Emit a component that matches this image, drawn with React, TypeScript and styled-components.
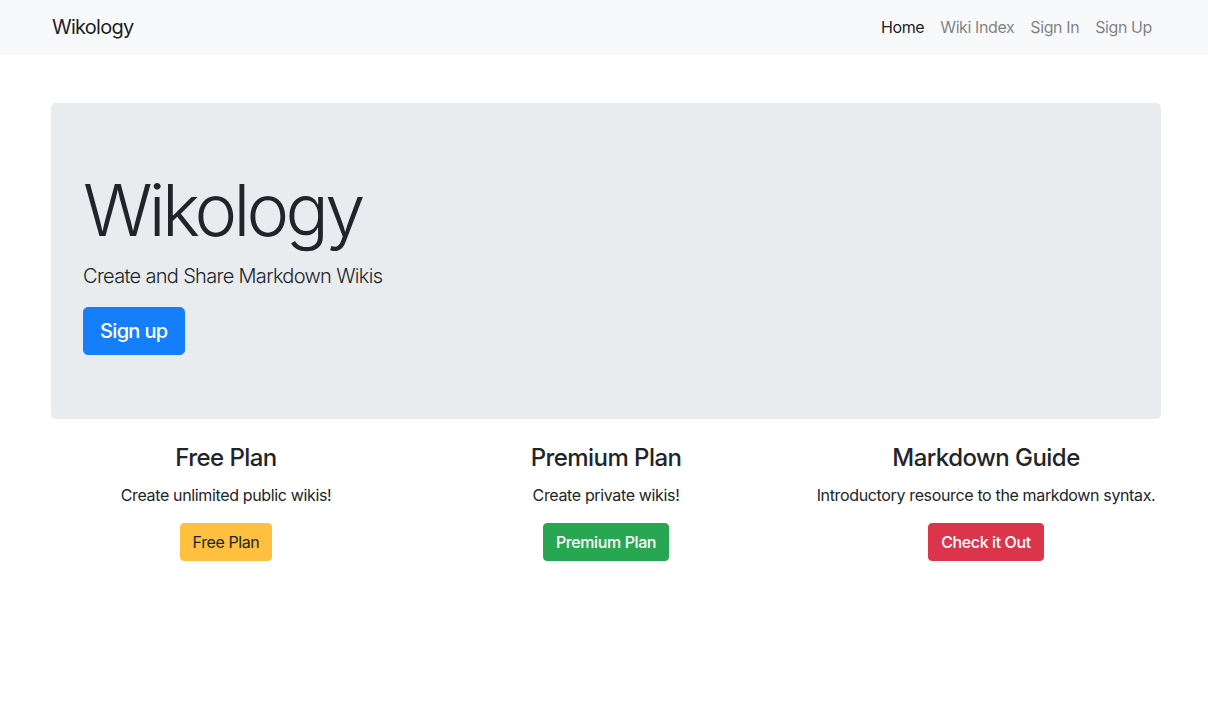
import React from "react";
import styled, { createGlobalStyle, css } from "styled-components";

const Global = createGlobalStyle`
  * { box-sizing: border-box; }
  html, body { margin: 0; padding: 0; background: #fff; }
  body {
    font-family: Inter, "Noto Sans", "Liberation Sans", sans-serif;
    font-size: 16px;
    line-height: 1.5;
    color: #212529;
    letter-spacing: -0.02em;
  }
`;

const Page = styled.div`
  width: 1212px;
`;

const NavBar = styled.nav`
  background: #f8f9fa;
  height: 55px;
`;

const NavInner = styled.div`
  width: 1140px;
  margin: 0 auto;
  height: 100%;
  padding: 0 16px;
  display: flex;
  align-items: center;
  justify-content: space-between;
`;

const Brand = styled.a`
  font-size: 20px;
  line-height: 30px;
  letter-spacing: -0.037em;
  color: rgba(0, 0, 0, 0.9);
  text-decoration: none;
  margin-top: -1px;
`;

const NavList = styled.ul`
  list-style: none;
  margin: -1px 0 0;
  padding: 0;
  display: flex;
`;

const NavLink = styled.a<{ $active?: boolean }>`
  display: block;
  padding: 8px 8px;
  font-size: 16px;
  line-height: 24px;
  letter-spacing: -0.025em;
  text-decoration: none;
  color: ${(p) => (p.$active ? "rgba(0,0,0,0.9)" : "rgba(0,0,0,0.5)")};
`;

const Container = styled.div`
  width: 1140px;
  margin: 0 auto;
  padding: 0 15px;
`;

const Jumbotron = styled.section`
  margin-top: 48px;
  background: #e9ecef;
  border-radius: 4.8px;
  padding: 64px 32px;
`;

const Display = styled.h1`
  margin: 0 0 8px;
  font-size: 72px;
  font-weight: 300;
  line-height: 1.2;
  letter-spacing: -0.052em;
`;

const Lead = styled.p`
  margin: 0 0 16px;
  font-size: 20px;
  font-weight: 300;
  line-height: 30px;
  letter-spacing: -0.034em;
`;

type Variant = "primary" | "warning" | "success" | "danger";

const colors: Record<Variant, { bg: string; fg: string }> = {
  primary: { bg: "#157ffb", fg: "#fff" },
  warning: { bg: "#ffc03f", fg: "#212529" },
  success: { bg: "#27a751", fg: "#fff" },
  danger: { bg: "#dc344a", fg: "#fff" },
};

const Button = styled.a<{ $variant: Variant; $large?: boolean }>`
  display: inline-block;
  text-decoration: none;
  border: 1px solid ${(p) => colors[p.$variant].bg};
  background: ${(p) => colors[p.$variant].bg};
  color: ${(p) => colors[p.$variant].fg};
  font-weight: ${(p) => (p.$variant === "warning" ? 400 : 500)};
  ${(p) =>
    p.$large
      ? css`
          padding: 8px 16px;
          font-size: 20px;
          line-height: 30px;
          letter-spacing: -0.033em;
          border-radius: 4.8px;
        `
      : css`
          padding: 6px 12px;
          font-size: 16px;
          line-height: 24px;
          letter-spacing: -0.025em;
          border-radius: 4px;
        `}
`;

const Row = styled.div`
  display: grid;
  grid-template-columns: repeat(3, 1fr);
  margin: 25px -15px 0;
`;

const Col = styled.div`
  padding: 0 15px;
  text-align: center;
`;

const ColTitle = styled.h4`
  margin: 0 0 10px;
  font-size: 24px;
  font-weight: 500;
  line-height: 1.2;
  letter-spacing: -0.023em;
`;

const ColText = styled.p`
  margin: 0 0 16px;
  font-size: 16px;
  line-height: 24px;
  letter-spacing: -0.022em;
`;

const plans: { title: string; text: string; label: string; variant: Variant }[] = [
  { title: "Free Plan", text: "Create unlimited public wikis!", label: "Free Plan", variant: "warning" },
  { title: "Premium Plan", text: "Create private wikis!", label: "Premium Plan", variant: "success" },
  {
    title: "Markdown Guide",
    text: "Introductory resource to the markdown syntax.",
    label: "Check it Out",
    variant: "danger",
  },
];

export default function App() {
  return (
    <Page>
      <Global />
      <NavBar>
        <NavInner>
          <Brand href="#">Wikology</Brand>
          <NavList>
            <li><NavLink $active href="#">Home</NavLink></li>
            <li><NavLink href="#">Wiki Index</NavLink></li>
            <li><NavLink href="#">Sign In</NavLink></li>
            <li><NavLink href="#">Sign Up</NavLink></li>
          </NavList>
        </NavInner>
      </NavBar>
      <Container>
        <Jumbotron>
          <Display>Wikology</Display>
          <Lead>Create and Share Markdown Wikis</Lead>
          <Button $variant="primary" $large href="#">Sign up</Button>
        </Jumbotron>
        <Row>
          {plans.map((p) => (
            <Col key={p.title}>
              <ColTitle>{p.title}</ColTitle>
              <ColText>{p.text}</ColText>
              <Button $variant={p.variant} href="#">{p.label}</Button>
            </Col>
          ))}
        </Row>
      </Container>
    </Page>
  );
}
